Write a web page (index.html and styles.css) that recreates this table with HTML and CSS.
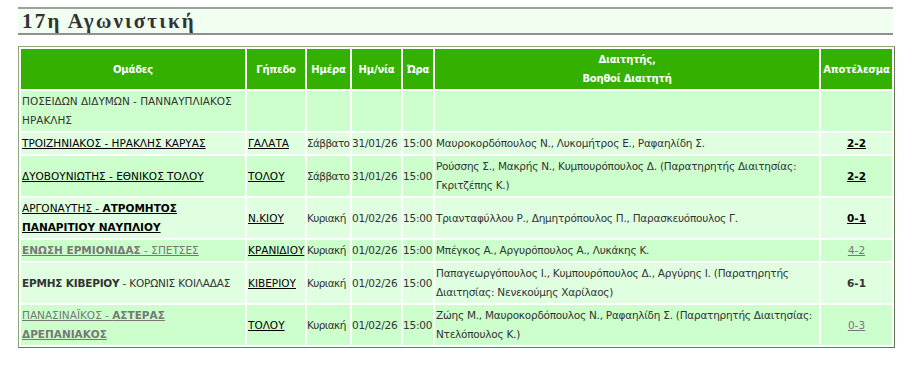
FILE: index.html
```html
<!DOCTYPE html>
<html lang="el">
<head>
<meta charset="utf-8">
<title>17η Αγωνιστική</title>
<link rel="stylesheet" href="styles.css">
</head>
<body>
<div class="page">
  <h2 class="round-title">17η Αγωνιστική</h2>
  <table class="matches">
    <thead>
      <tr>
        <th class="c-teams">Ομάδες</th>
        <th class="c-field">Γήπεδο</th>
        <th class="c-day">Ημέρα</th>
        <th class="c-date">Ημ/νία</th>
        <th class="c-time">Ώρα</th>
        <th class="c-ref">Διαιτητής,<br>Βοηθοί Διαιτητή</th>
        <th class="c-res">Αποτέλεσμα</th>
      </tr>
    </thead>
    <tbody>
      <tr class="dark">
        <td>ΠΟΣΕΙΔΩΝ ΔΙΔΥΜΩΝ - ΠΑΝΝΑΥΠΛΙΑΚΟΣ ΗΡΑΚΛΗΣ</td>
        <td></td><td></td><td></td><td></td><td></td><td></td>
      </tr>
      <tr class="light">
        <td><a href="#">ΤΡΟΙΖΗΝΙΑΚΟΣ - ΗΡΑΚΛΗΣ ΚΑΡΥΑΣ</a></td>
        <td><a href="#">ΓΑΛΑΤΑ</a></td>
        <td>Σάββατο</td><td>31/01/26</td><td>15:00</td>
        <td>Μαυροκορδόπουλος Ν., Λυκομήτρος Ε., Ραφαηλίδη Σ.</td>
        <td class="res"><a href="#"><b>2-2</b></a></td>
      </tr>
      <tr class="dark">
        <td><a href="#">ΔΥΟΒΟΥΝΙΩΤΗΣ - ΕΘΝΙΚΟΣ ΤΟΛΟΥ</a></td>
        <td><a href="#">ΤΟΛΟΥ</a></td>
        <td>Σάββατο</td><td>31/01/26</td><td>15:00</td>
        <td>Ρούσσης Σ., Μακρής Ν., Κυμπουρόπουλος Δ. (Παρατηρητής Διαιτησίας: Γκριτζέπης Κ.)</td>
        <td class="res"><a href="#"><b>2-2</b></a></td>
      </tr>
      <tr class="light">
        <td><a href="#">ΑΡΓΟΝΑΥΤΗΣ - <b>ΑΤΡΟΜΗΤΟΣ ΠΑΝΑΡΙΤΙΟΥ ΝΑΥΠΛΙΟΥ</b></a></td>
        <td><a href="#">Ν.ΚΙΟΥ</a></td>
        <td>Κυριακή</td><td>01/02/26</td><td>15:00</td>
        <td>Τριανταφύλλου Ρ., Δημητρόπουλος Π., Παρασκευόπουλος Γ.</td>
        <td class="res"><a href="#"><b>0-1</b></a></td>
      </tr>
      <tr class="dark">
        <td><a href="#" class="muted"><b>ΕΝΩΣΗ ΕΡΜΙΟΝΙΔΑΣ</b> - ΣΠΕΤΣΕΣ</a></td>
        <td><a href="#">ΚΡΑΝΙΔΙΟΥ</a></td>
        <td>Κυριακή</td><td>01/02/26</td><td>15:00</td>
        <td>Μπέγκος Α., Αργυρόπουλος Α., Λυκάκης Κ.</td>
        <td class="res"><a href="#" class="muted">4-2</a></td>
      </tr>
      <tr class="light">
        <td class="nowrap"><b>ΕΡΜΗΣ ΚΙΒΕΡΙΟΥ</b> - ΚΟΡΩΝΙΣ ΚΟΙΛΑΔΑΣ</td>
        <td><a href="#">ΚΙΒΕΡΙΟΥ</a></td>
        <td>Κυριακή</td><td>01/02/26</td><td>15:00</td>
        <td>Παπαγεωργόπουλος Ι., Κυμπουρόπουλος Δ., Αργύρης Ι. (Παρατηρητής Διαιτησίας: Νενεκούμης Χαρίλαος)</td>
        <td class="res"><b>6-1</b></td>
      </tr>
      <tr class="dark">
        <td><a href="#" class="muted">ΠΑΝΑΣΙΝΑΪΚΟΣ - <b>ΑΣΤΕΡΑΣ ΔΡΕΠΑΝΙΑΚΟΣ</b></a></td>
        <td><a href="#">ΤΟΛΟΥ</a></td>
        <td>Κυριακή</td><td>01/02/26</td><td>15:00</td>
        <td>Ζώης Μ., Μαυροκορδόπουλος Ν., Ραφαηλίδη Σ. (Παρατηρητής Διαιτησίας: Ντελόπουλος Κ.)</td>
        <td class="res"><a href="#" class="muted">0-3</a></td>
      </tr>
    </tbody>
  </table>
</div>
</body>
</html>
```

FILE: styles.css
```css
html, body {
  margin: 0;
  padding: 0;
  background: #ffffff;
}

.page {
  padding: 7px 7px 0 18px;
  font-family: "DejaVu Sans", Verdana, sans-serif;
  font-size: 10.5px;
  color: #333333;
}

.round-title {
  margin: 0 0 11px 0;
  height: 24px;
  line-height: 25px;
  padding: 0 0 0 4px;
  background: #f0fff0;
  border-top: 2px solid #a0a0a0;
  border-bottom: 2px solid #909090;
  font-family: "Liberation Serif", "DejaVu Serif", serif;
  font-size: 21px;
  font-weight: bold;
  letter-spacing: 2.2px;
  color: #333333;
}

.matches {
  width: 875px;
  border-collapse: separate;
  border-spacing: 2px;
  border: 1px solid;
  border-color: #8aa87a #5f7f50 #5f7f50 #8aa87a;
  table-layout: fixed;
}

.matches th {
  background: #33b000;
  color: #ffffff;
  font-weight: bold;
  font-size: 10px;
  letter-spacing: -0.2px;
  line-height: 19px;
  padding: 1px 0;
  text-align: center;
  white-space: nowrap;
}

.matches td {
  line-height: 19px;
  padding: 1px 1px;
  vertical-align: middle;
  text-align: left;
}

.c-teams { width: 224px; }
.c-field { width: 58px; }
.c-day { width: 43px; }
.c-date { width: 49px; }
.c-time { width: 30px; }
.c-ref { width: 384px; }
.c-res { width: 71px; }

.matches td:nth-child(3),
.matches td:nth-child(4),
.matches td:nth-child(5) {
  padding: 1px 0;
  white-space: nowrap;
  letter-spacing: -0.2px;
}

.matches td:nth-child(3) {
  letter-spacing: -0.6px;
}

.matches td:nth-child(2) {
  white-space: nowrap;
}

.matches td:nth-child(6) {
  letter-spacing: -0.25px;
  padding-right: 0;
}

.matches td.nowrap {
  white-space: nowrap;
  letter-spacing: -0.2px;
}

.dark td { background: #ccffcc; }
.light td { background: #e0ffe0; }

.matches a {
  color: #000000;
  text-decoration: underline;
}

.matches a.muted {
  color: #777777;
}

.matches td.res {
  text-align: center;
}
```
